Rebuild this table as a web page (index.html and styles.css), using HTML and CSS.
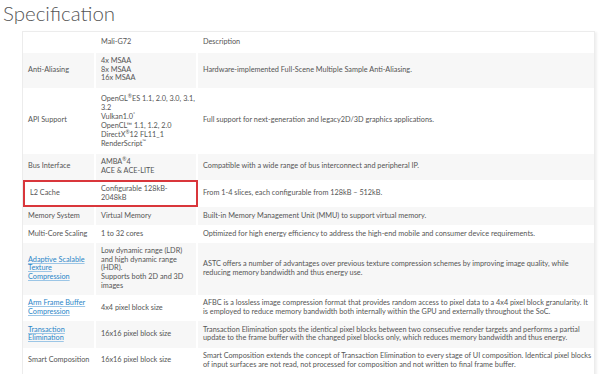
FILE: index.html
```html
<!DOCTYPE html>
<html>
<head>
<meta charset="utf-8">
<link rel="stylesheet" href="styles.css">
</head>
<body>
<h1 class="title">Specification</h1>
<div class="box">
<table class="spec">
<colgroup><col class="c1"><col class="c2"><col class="c3"></colgroup>
<tr class="head"><td></td><td>Mali-G72</td><td>Description</td></tr>
<tr class="alt"><td>Anti-Aliasing</td><td>4x MSAA<br>8x MSAA<br>16x MSAA</td><td>Hardware-implemented Full-Scene Multiple Sample Anti-Aliasing.</td></tr>
<tr><td>API Support</td><td class="api"><span class="nw">OpenGL<sup>®</sup>ES 1.1, 2.0, 3.0, 3.1,</span><br>3.2<br>Vulkan1.0<sup>*</sup><br>OpenCL™ 1.1, 1.2, 2.0<br>DirectX<sup>®</sup>12 FL11_1<br>RenderScript<sup>™</sup></td><td>Full support for next-generation and legacy2D/3D graphics applications.</td></tr>
<tr class="alt"><td>Bus Interface</td><td>AMBA<sup>®</sup>4<br>ACE &amp; ACE-LITE</td><td>Compatible with a wide range of bus interconnect and peripheral IP.</td></tr>
<tr class="hl"><td class="hl1">L2 Cache</td><td class="hl2">Configurable 128kB-<br>2048kB</td><td>From 1-4 slices, each configurable from 128kB – 512kB.</td></tr>
<tr class="alt"><td>Memory System</td><td>Virtual Memory</td><td>Built-in Memory Management Unit (MMU) to support virtual memory.</td></tr>
<tr><td>Multi-Core Scaling</td><td>1 to 32 cores</td><td>Optimized for high energy efficiency to address the high-end mobile and consumer device requirements.</td></tr>
<tr class="alt"><td><a href="#">Adaptive Scalable Texture Compression</a></td><td>Low dynamic range (LDR) and high dynamic range (HDR).<br>Supports both 2D and 3D images</td><td>ASTC offers a number of advantages over previous texture compression schemes by improving image quality, while reducing memory bandwidth and thus energy use.</td></tr>
<tr><td><a href="#">Arm Frame Buffer Compression</a></td><td>4x4 pixel block size</td><td>AFBC is a lossless image compression format that provides random access to pixel data to a 4x4 pixel block granularity. It is employed to reduce memory bandwidth both internally within the GPU and externally throughout the SoC.</td></tr>
<tr class="alt"><td><a href="#">Transaction Elimination</a></td><td>16x16 pixel block size</td><td>Transaction Elimination spots the identical pixel blocks between two consecutive render targets and performs a partial update to the frame buffer with the changed pixel blocks only, which reduces memory bandwidth and thus energy.</td></tr>
<tr><td>Smart Composition</td><td>16x16 pixel block size</td><td>Smart Composition extends the concept of Transaction Elimination to every stage of UI composition. Identical pixel blocks of input surfaces are not read, not processed for composition and not written to final frame buffer.</td></tr>
</table>
</div>
</body>
</html>
```
FILE: styles.css
```css
html, body {
  margin: 0;
  padding: 0;
  background: #fff;
}
body {
  font-family: Lato, "Open Sans", sans-serif;
  color: #555;
}
.title {
  margin: 0;
  padding: 1px 0 0 3px;
  height: 30px;
  font-size: 20.5px;
  font-weight: 300;
  color: #555;
  line-height: 24px;
}
.box {
  margin-left: 22px;
  width: 571px;
  border: 1px solid #ececec;
  box-shadow: 2px 1px 2px rgba(0,0,0,0.06);
}
.spec {
  width: 100%;
  border-collapse: separate;
  border-spacing: 0;
  table-layout: fixed;
  font-size: 7.3px;
  line-height: 8.6px;
}
.c1 { width: 73px; }
.c2 { width: 102px; }
.spec td {
  padding: 4.6px 4px 4.6px 5px;
  vertical-align: middle;
  border-right: 2px solid #fff;
}
.spec td:nth-child(2) { padding-right: 2px; }
.spec td:last-child { border-right: 0; padding-right: 1px; }
.spec tr.head td {
  padding-top: 6px;
  padding-bottom: 6px;
}
.spec td.api {
  padding-top: 6px;
  padding-bottom: 6px;
  line-height: 9px;
}
.nw { white-space: nowrap; }
.spec tr.alt td { background: #f7f7f7; }
.spec sup {
  font-size: 5px;
  line-height: 0;
}
.spec a {
  color: #2a86c8;
  text-decoration: underline;
  text-decoration-color: #9cc6e6;
}
.spec td.hl1 {
  border: 2px solid #d9363b;
  border-right: 0;
}
.spec td.hl2 {
  border: 2px solid #d9363b;
  border-left: 0;
}
.spec tr.hl td {
  padding-top: 3px;
  padding-bottom: 3px;
}
```
